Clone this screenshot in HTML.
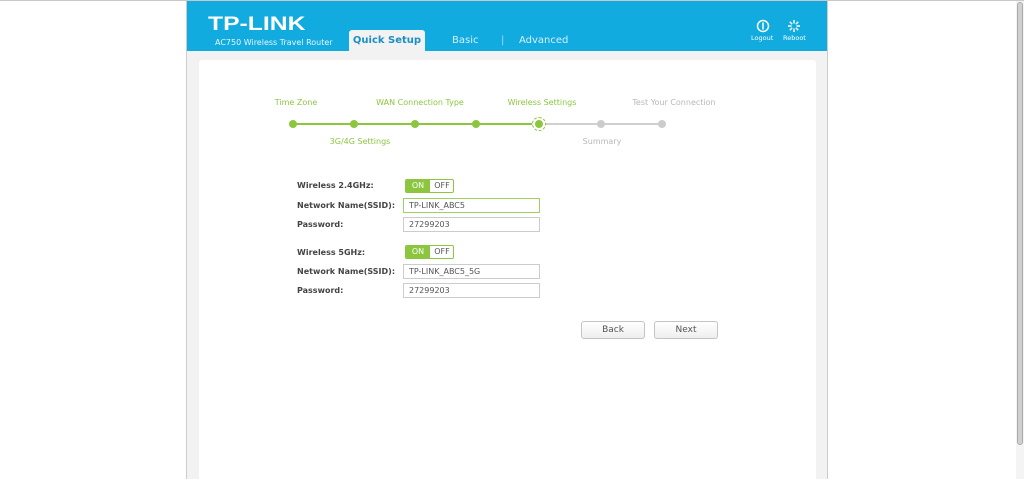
<!DOCTYPE html>
<html><head><meta charset="utf-8"><style>
*{margin:0;padding:0;box-sizing:border-box}
body{width:1024px;height:478px;background:#fff;font-family:"DejaVu Sans","Liberation Sans",sans-serif;position:relative;overflow:hidden;border-top:1px solid #c8c8c8}
.wrap{position:absolute;left:186px;top:0px;width:642px;height:478px;background:#f2f2f2;border-left:1px solid #ccc;border-right:1px solid #ccc}
.hdr{position:absolute;left:0;top:0;width:640px;height:50px;background:#12abe0}
.logo{position:absolute;left:21px;top:13px;color:#fff;font:bold 19px "Liberation Sans",sans-serif;transform:scaleX(1.3);transform-origin:left}
.sub{position:absolute;left:28px;top:37px;color:#e8f6fc;font-size:8px}
.tab{position:absolute;left:162px;top:29px;width:76px;height:22px;background:#f2f2f2;border-radius:3px 3px 0 0;color:#1a8fc4;font-weight:bold;font-size:10px;text-align:center;line-height:22px}
.nav{position:absolute;top:34px;color:#d6f0fb;font-size:10px}
.ic{position:absolute;top:33px;color:#fff;font-size:6.5px;text-align:center}
.panel{position:absolute;left:12px;top:59px;width:617px;height:430px;background:#fff;border-radius:3px}
.s{position:absolute;font-size:8px;white-space:nowrap;transform:translateX(-50%)}
.g{color:#8cc63f}.gr{color:#b8b8b8}
.dot{position:absolute;width:8px;height:8px;border-radius:50%;top:119px;}
.lb{position:absolute;left:297px;font-size:8px;font-weight:bold;color:#444}
.in{position:absolute;left:403px;width:137px;height:15px;border:1px solid #ccc;font-size:8px;color:#555;padding-left:5px;line-height:13px}
.tg{position:absolute;left:405px;width:49px;height:14px;border:1px solid #8cc63f;border-radius:2px;font-size:8px;overflow:hidden}
.tg span{position:absolute;top:0;height:12px;line-height:12px;text-align:center}
.btn{position:absolute;top:320px;width:64px;height:18px;border:1px solid #c4c4c4;border-radius:3px;background:linear-gradient(#fff,#eee);font-size:9px;color:#555;text-align:center;line-height:16px}
</style></head><body>
<div class="wrap">
<div class="hdr">
<div class="logo">TP-LINK</div>
<div class="sub">AC750 Wireless Travel Router</div>
<div class="tab">Quick Setup</div>
<div class="nav" style="left:265px">Basic</div>
<div class="nav" style="left:314px;color:#9fdcf3">|</div>
<div class="nav" style="left:332px">Advanced</div>
<div class="ic" style="left:564px"><svg width="14" height="14" viewBox="0 0 14 14" style="position:absolute;left:5px;top:-15px"><circle cx="7" cy="7" r="5.5" fill="none" stroke="#fff" stroke-width="1.5"/><path d="M7 3.5v7" stroke="#fff" stroke-width="1.5"/></svg>Logout</div>
<div class="ic" style="left:596px"><svg width="14" height="14" viewBox="0 0 14 14" style="position:absolute;left:4px;top:-15px" stroke="#fff" stroke-width="1.4"><path d="M7 1v3.5M7 9.5V13M1 7h3.5M9.5 7H13M2.8 2.8l2.4 2.4M8.8 8.8l2.4 2.4M2.8 11.2l2.4-2.4M8.8 5.2l2.4-2.4"/></svg>Reboot</div>
</div>
<div class="panel"></div>
</div>
<div class="s g" style="left:296px;top:97px">Time Zone</div>
<div class="s g" style="left:420px;top:97px">WAN Connection Type</div>
<div class="s g" style="left:542px;top:97px">Wireless Settings</div>
<div class="s gr" style="left:674px;top:97px">Test Your Connection</div>
<div class="s g" style="left:360px;top:136px">3G/4G Settings</div>
<div class="s gr" style="left:602px;top:136px">Summary</div>
<div style="position:absolute;left:293px;top:122px;width:246px;height:2px;background:#8cc63f"></div>
<div style="position:absolute;left:539px;top:122px;width:123px;height:2px;background:#d0d0d0"></div>
<div class="dot" style="left:289px;background:#8cc63f"></div>
<div class="dot" style="left:350px;background:#8cc63f"></div>
<div class="dot" style="left:411px;background:#8cc63f"></div>
<div class="dot" style="left:472px;background:#8cc63f"></div>
<div style="position:absolute;left:532px;top:116px;width:14px;height:14px;border-radius:50%;border:1px dashed #8cc63f;background:#fff"></div>
<div class="dot" style="left:535px;background:#8cc63f"></div>
<div class="dot" style="left:597px;background:#ccc"></div>
<div class="dot" style="left:658px;background:#ccc"></div>

<div class="lb" style="top:180px">Wireless 2.4GHz:</div>
<div class="tg" style="top:178px"><span style="left:0;width:24px;background:#8cc63f;color:#fff">ON</span><span style="left:24px;width:24px;color:#555">OFF</span></div>
<div class="lb" style="top:200px">Network Name(SSID):</div>
<div class="in" style="top:197px;border-color:#9fd060">TP-LINK_ABC5</div>
<div class="lb" style="top:219px">Password:</div>
<div class="in" style="top:216px">27299203</div>
<div class="lb" style="top:247px">Wireless 5GHz:</div>
<div class="tg" style="top:244px"><span style="left:0;width:24px;background:#8cc63f;color:#fff">ON</span><span style="left:24px;width:24px;color:#555">OFF</span></div>
<div class="lb" style="top:266px">Network Name(SSID):</div>
<div class="in" style="top:263px">TP-LINK_ABC5_5G</div>
<div class="lb" style="top:285px">Password:</div>
<div class="in" style="top:282px">27299203</div>
<div class="btn" style="left:581px">Back</div>
<div class="btn" style="left:654px">Next</div>
<div style="position:absolute;left:1016px;top:0px;width:8px;height:478px;background:#f4f4f4"></div>
<div style="position:absolute;left:1017px;top:1px;width:6px;height:443px;background:#d0d0d0;border:1px solid #aaa;border-radius:3px"></div>
</body></html>
